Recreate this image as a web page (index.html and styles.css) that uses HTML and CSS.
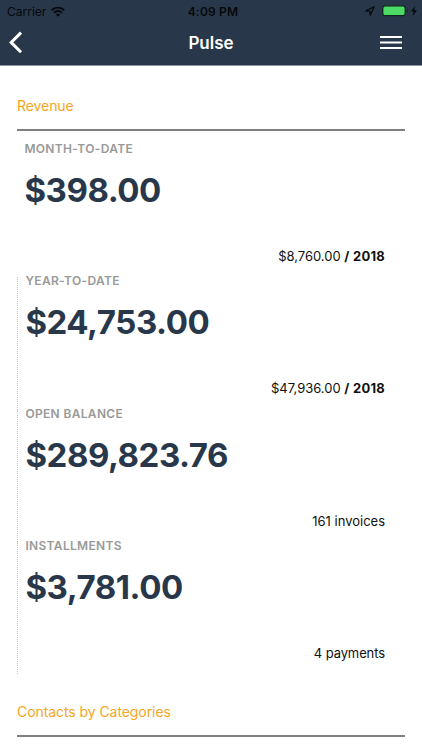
FILE: index.html
```
<!DOCTYPE html>
<html lang="en">

<head>
  <meta charset="UTF-8">
  <meta name="viewport" content="width=device-width, initial-scale=1.0">
  <title>Pulse</title>
  <link rel="stylesheet" href="styles.css">
</head>

<body>

  <header>
    <div class="status-bar">
      <div class="status-left">
        <span class="carrier">Carrier</span>
        <svg class="wifi" width="14" height="11" viewBox="0 0 14 11">
          <g fill="none" stroke="#05080b" stroke-width="1.9">
            <path d="M0.7 4.2a9 9 0 0 1 12.6 0" />
            <path d="M3 6.7a5.7 5.7 0 0 1 8 0" />
          </g>
          <path d="M7 10.7 4.9 8.6a3 3 0 0 1 4.2 0z" fill="#05080b" />
        </svg>
      </div>
      <span class="clock">4:09 PM</span>
      <div class="status-right">
        <svg width="10" height="10" viewBox="0 0 10 10">
          <path d="M9.2 0.8 0.8 4.8l4.1.3.3 4.1z" fill="none" stroke="#05080b" stroke-width="1.2" stroke-linejoin="round" />
        </svg>
        <svg class="battery" width="27" height="12" viewBox="0 0 27 12">
          <rect x="0.8" y="0.8" width="22.4" height="9.9" rx="2.2" fill="#4cd964" stroke="#10241f" stroke-width="1.2" />
          <path d="M24.6 4v3.6q1.2-.6 1.2-1.8T24.6 4z" fill="#10202a" />
        </svg>
        <svg class="bolt" width="6" height="10" viewBox="0 0 6 10">
          <path d="M4 0 0 5.5h2.6L1.7 10 6 4.2H3.3z" fill="#05080b" />
        </svg>
      </div>
    </div>
    <nav class="nav-bar">
      <button class="nav-button back-button" aria-label="Back">
        <svg width="14" height="23" viewBox="0 0 14 23">
          <path d="M12 1.6 2.2 11.4 12 21.2" fill="none" stroke="#fff" stroke-width="3" />
        </svg>
      </button>
      <h1>Pulse</h1>
      <button class="nav-button" aria-label="Menu">
        <svg width="22" height="13" viewBox="0 0 22 13">
          <path d="M0 1.1h22M0 6.5h22M0 11.9h22" stroke="#fff" stroke-width="2" />
        </svg>
      </button>
    </nav>
  </header>

  <main>
    <section>
      <h2>Revenue</h2>
      <div class="metric first">
        <h3>Month-to-date</h3>
        <p class="amount">$398.00</p>
        <p class="note">$8,760.00 <strong>/ 2018</strong></p>
      </div>
      <div class="metric">
        <h3>Year-to-date</h3>
        <p class="amount">$24,753.00</p>
        <p class="note">$47,936.00 <strong>/ 2018</strong></p>
      </div>
      <div class="metric">
        <h3>Open balance</h3>
        <p class="amount">$289,823.76</p>
        <p class="note">161 invoices</p>
      </div>
      <div class="metric">
        <h3>Installments</h3>
        <p class="amount">$3,781.00</p>
        <p class="note count">4 payments</p>
      </div>
    </section>
    <section class="categories">
      <h2>Contacts by Categories</h2>
    </section>
  </main>

</body>

</html>
```
FILE: styles.css
```
* {
  box-sizing: border-box;
}

body {
  margin: 0;
  height: 750px;
  overflow: hidden;
  font-family: Inter, 'Liberation Sans', sans-serif;
  background: #ffffff;
  color: #111111;
}

h1,
h2,
h3,
p {
  margin: 0;
}

header {
  height: 66px;
  background: #28384a;
  border-bottom: 1px solid #8a939c;
}

.status-bar {
  display: grid;
  grid-template-columns: 1fr auto 1fr;
  align-items: center;
  height: 22px;
  padding: 0 5px 0 7px;
  font-size: 12px;
  color: #05080b;
}

.status-left,
.status-right {
  display: flex;
  align-items: center;
}

.wifi {
  margin-left: 5px;
}

.clock {
  padding-left: 2px;
  font-weight: 600;
  letter-spacing: 0.2px;
}

.status-right {
  justify-content: flex-end;
}

.battery {
  margin-left: 7px;
}

.bolt {
  margin-left: 2px;
}

.nav-bar {
  display: flex;
  justify-content: space-between;
  align-items: center;
  height: 43px;
  padding: 0 20px 2px 9px;
}

.nav-button {
  display: flex;
  width: 22px;
  padding: 0;
  border: none;
  background: none;
}

.back-button {
  width: 33px;
}

h1 {
  font-size: 17px;
  font-weight: 600;
  color: #ffffff;
}

main {
  padding: 29px 17px 0;
}

h2 {
  height: 36px;
  line-height: 21px;
  border-bottom: 2px solid #808080;
  font-size: 14px;
  font-weight: 400;
  letter-spacing: -0.07px;
  color: #f5a623;
}

.metric {
  height: 132.33px;
  padding: 0 20px 0 7.4px;
  border-left: 1px dotted #c8c8c8;
}

.metric.first {
  margin-top: 14px;
  padding-left: 6.4px;
  border-left-color: transparent;
}

h3 {
  line-height: 8px;
  font-size: 12px;
  font-weight: 600;
  letter-spacing: 0.33px;
  text-transform: uppercase;
  color: #999999;
}

.amount {
  margin-top: 17px;
  line-height: 40px;
  font-size: 33px;
  font-weight: 700;
  letter-spacing: -0.45px;
  color: #28384a;
}

.note {
  margin-top: 36px;
  line-height: 20px;
  font-size: 13px;
  text-align: right;
}

.note strong {
  letter-spacing: 0.25px;
}

.count {
  letter-spacing: -0.1px;
}

.categories {
  margin-top: 27px;
}
```
